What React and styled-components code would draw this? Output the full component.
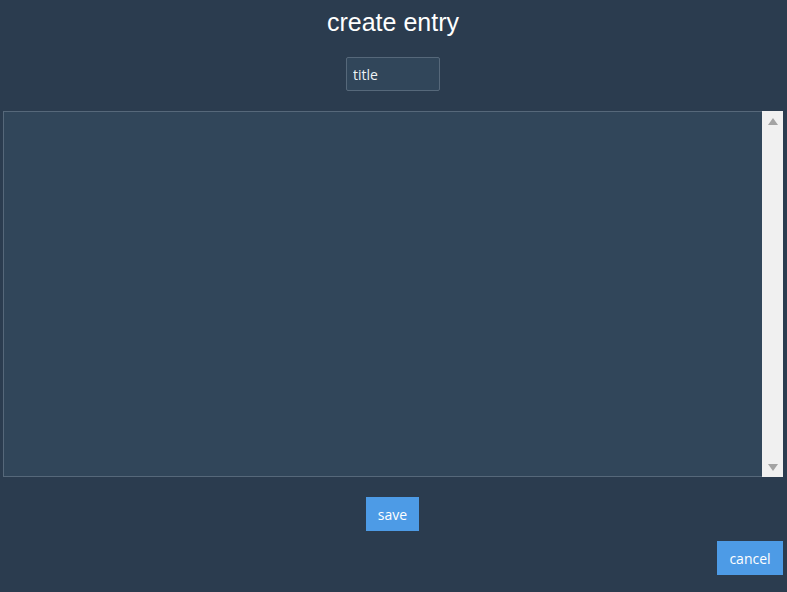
import React from 'react';
import styled, { createGlobalStyle } from 'styled-components';

const GlobalStyle = createGlobalStyle`
  html, body {
    margin: 0;
    padding: 0;
    background: #2b3c4f;
  }
`;

const Page = styled.div`
  width: 786px;
  height: 592px;
  background: #2b3c4f;
  display: flex;
  flex-direction: column;
  align-items: center;
  box-sizing: border-box;
  padding-top: 8px;
`;

const Title = styled.h1`
  margin: 0;
  font-family: 'Liberation Sans', Arial, sans-serif;
  font-weight: normal;
  font-size: 25px;
  line-height: 28px;
  color: #ffffff;
`;

const TitleInput = styled.input`
  margin-top: 21px;
  width: 94px;
  height: 34px;
  box-sizing: border-box;
  background: #31465a;
  border: 1px solid #56687a;
  border-radius: 2px;
  color: #f0f0f0;
  font-family: 'Open Sans', 'Noto Sans', sans-serif;
  font-size: 14px;
  padding: 0 6px;
  outline: none;
  &::placeholder {
    color: #eef2f5;
  }
`;

const Frame = styled.div`
  margin-top: 20px;
  align-self: stretch;
  margin-left: 3px;
  margin-right: 3px;
  height: 366px;
  display: flex;
`;

const Editor = styled.textarea`
  flex: 1;
  resize: none;
  box-sizing: border-box;
  background: #31465a;
  border: 1px solid #56687a;
  border-right: none;
  outline: none;
  overflow: hidden;
  color: #ffffff;
  font-family: 'Open Sans', sans-serif;
  font-size: 14px;
  margin: 0;
`;

const Scrollbar = styled.div`
  width: 21px;
  background: #f0f0f0;
  display: flex;
  flex-direction: column;
  justify-content: space-between;
  align-items: center;
  padding: 7px 0 6px;
  box-sizing: border-box;
`;

const Arrow = styled.div`
  width: 0;
  height: 0;
  border-left: 5px solid transparent;
  border-right: 5px solid transparent;
  ${(p) => (p.$down ? 'border-top: 7px solid #a3a3a3;' : 'border-bottom: 7px solid #a3a3a3;')}
`;

const Button = styled.button`
  border: none;
  border-radius: 0;
  background: #4d9be6;
  color: #ffffff;
  font-family: 'Open Sans', 'Noto Sans', sans-serif;
  font-size: 14px;
  height: 34px;
  width: ${(p) => p.$width}px;
  padding: 0;
  cursor: pointer;
`;

const SaveButton = styled(Button)`
  margin-top: 20px;
  margin-right: 1px;
`;

const CancelButton = styled(Button)`
  margin-top: 10px;
  align-self: flex-end;
  margin-right: 3px;
`;

const App = () => {
  return (
    <Page>
      <GlobalStyle />
      <Title>create entry</Title>
      <TitleInput placeholder="title" />
      <Frame>
        <Editor />
        <Scrollbar>
          <Arrow />
          <Arrow $down />
        </Scrollbar>
      </Frame>
      <SaveButton $width={53}>save</SaveButton>
      <CancelButton $width={66}>cancel</CancelButton>
    </Page>
  );
};

export default App;
